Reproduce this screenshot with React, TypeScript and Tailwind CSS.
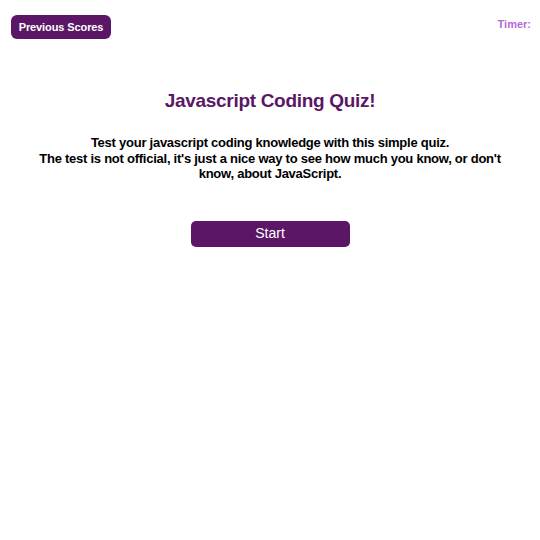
import React from "react";

export default function App() {
  return (
    <div className="w-[540px] h-[540px] bg-white" style={{ fontFamily: '"Liberation Sans", Arial, sans-serif' }}>
      <div className="flex items-start justify-between pl-[11px] pr-[9px] pt-[15px]">
        <button className="h-[24px] w-[100px] rounded-[6px] bg-[#5b1766] text-white text-[11px] font-bold tracking-[-0.1px]">
          Previous Scores
        </button>
        <div className="text-[11px] font-bold text-[#b56ad6] mt-[1px]">Timer:</div>
      </div>
      <h1 className="mt-[50px] text-center text-[19px] font-bold text-[#5b1766] leading-[24px] tracking-[-0.3px]">
        Javascript Coding Quiz!
      </h1>
      <p className="mx-auto mt-[22px] w-[480px] text-center text-[13px] font-bold text-black leading-[15.5px] tracking-[-0.25px]">
        Test your javascript coding knowledge with this simple quiz.
        <br />
        The test is not official, it's just a nice way to see how much you know, or don't know, about JavaScript.
      </p>
      <div className="mt-[39px] flex justify-center">
        <button className="h-[26px] w-[159px] rounded-[5px] bg-[#5b1766] text-white text-[14px]">Start</button>
      </div>
    </div>
  );
}
